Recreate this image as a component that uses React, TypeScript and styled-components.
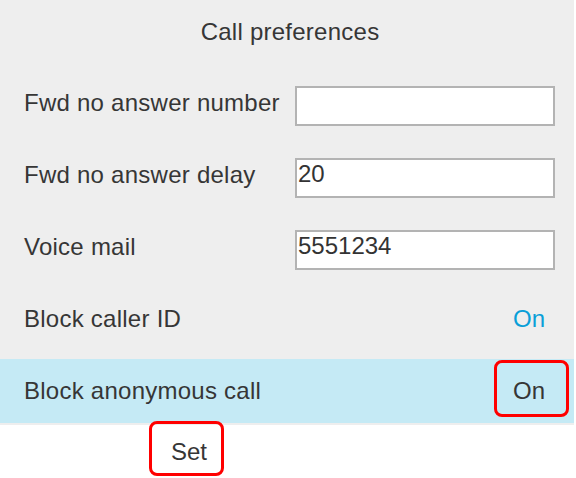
import React from "react";
import styled, { createGlobalStyle } from "styled-components";

const Global = createGlobalStyle`
  html, body { margin: 0; padding: 0; background: #ffffff; }
  body { font-family: "Liberation Sans", Arial, sans-serif; }
`;

const Screen = styled.div`
  width: 576px;
  height: 478px;
  display: flex;
  flex-direction: column;
  background: #ffffff;
  overflow: hidden;
`;

const Panel = styled.div`
  width: 574px;
  background: #eeeeee;
  padding-bottom: 2px;
  display: flex;
  flex-direction: column;
`;

const Title = styled.div`
  height: 64px;
  display: flex;
  align-items: center;
  justify-content: center;
  padding-left: 6px;
  font-size: 24px;
  letter-spacing: 0.25px;
  color: #363636;
`;

const List = styled.div`
  display: flex;
  flex-direction: column;
  gap: 8px;
  padding-top: 7px;
`;

const Row = styled.div<{ $selected?: boolean }>`
  height: 64px;
  display: flex;
  align-items: center;
  justify-content: space-between;
  padding: 0 19px 0 24px;
  background: ${(p) => (p.$selected ? "#c5eaf5" : "transparent")};
`;

const Label = styled.div`
  font-size: 24px;
  letter-spacing: 0.25px;
  color: #363636;
  white-space: nowrap;
`;

const Field = styled.div`
  box-sizing: border-box;
  width: 260px;
  height: 40px;
  margin-top: 6px;
  border: 2px solid #b3b3b3;
  background: #ffffff;
  padding: 0 1px;
  font-size: 24px;
  line-height: 28px;
  color: #333333;
`;

const Value = styled.div<{ $accent?: boolean; $marked?: boolean }>`
  position: relative;
  margin-right: 10px;
  font-size: 24px;
  color: ${(p) => (p.$accent ? "#0a9fd8" : "#363636")};
  ${(p) =>
    p.$marked &&
    `
    &::after {
      content: "";
      position: absolute;
      left: -19px;
      right: -24px;
      top: -17px;
      bottom: -12px;
      border: 3px solid #ff0000;
      border-radius: 8px;
    }
  `}
`;

const SoftkeyBar = styled.div`
  flex: 1;
  display: flex;
  align-items: center;
  padding-left: 171px;
  background: #ffffff;
`;

const Softkey = styled.div`
  position: relative;
  font-size: 24px;
  color: #363636;
  &::after {
    content: "";
    position: absolute;
    left: -22px;
    right: -17px;
    top: -17px;
    bottom: -10px;
    border: 3px solid #ff0000;
    border-radius: 8px;
  }
`;

export default function App() {
  return (
    <Screen>
      <Global />
      <Panel>
        <Title>Call preferences</Title>
        <List>
          <Row>
            <Label>Fwd no answer number</Label>
            <Field />
          </Row>
          <Row>
            <Label>Fwd no answer delay</Label>
            <Field>20</Field>
          </Row>
          <Row>
            <Label>Voice mail</Label>
            <Field>5551234</Field>
          </Row>
          <Row>
            <Label>Block caller ID</Label>
            <Value $accent>On</Value>
          </Row>
          <Row $selected>
            <Label>Block anonymous call</Label>
            <Value $marked>On</Value>
          </Row>
        </List>
      </Panel>
      <SoftkeyBar>
        <Softkey>Set</Softkey>
      </SoftkeyBar>
    </Screen>
  );
}
